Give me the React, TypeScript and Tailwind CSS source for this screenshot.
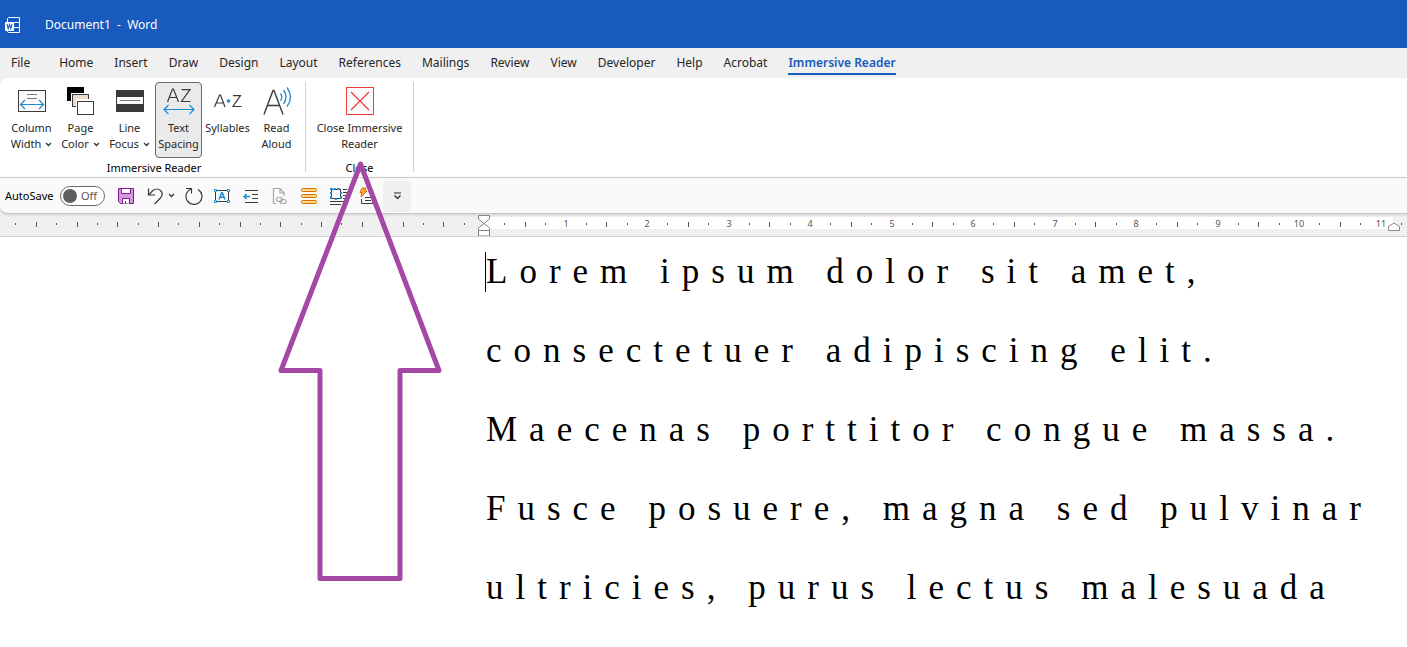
import { useState } from "react";
import type { ReactNode } from "react";

const TABS = ["File", "Home", "Insert", "Draw", "Design", "Layout", "References", "Mailings", "Review", "View", "Developer", "Help", "Acrobat", "Immersive Reader"];

const LINES = [
    "Lorem ipsum dolor sit amet,",
    "consectetuer adipiscing elit.",
    "Maecenas porttitor congue massa.",
    "Fusce posuere, magna sed pulvinar",
    "ultricies, purus lectus malesuada",
];

const Chevron = () => (
    <svg className="inline-block ml-1 mb-px" width="7" height="5" viewBox="0 0 7 5" fill="none" stroke="#333" strokeWidth="1.3">
        <path d="M1 1l2.5 2.5L6 1" />
    </svg>
);

const WordLogo = () => (
    <svg width="16" height="16" viewBox="0 0 16 16" fill="none" stroke="#fff">
        <path d="M2.5 5V1.5l1-1h11v15h-11l-1-1V13M9 5.5h5.5M9 10.5h5.5" />
        <rect x="0" y="5" width="9" height="9" rx="1" fill="#fff" stroke="none" />
        <path d="M2 7l1.2 4.6L4.5 7.6l1.3 4L7 7" stroke="#185abd" strokeWidth="1.1" />
    </svg>
);

const ColumnWidthIcon = () => (
    <svg width="32" height="32" viewBox="0 0 32 32" fill="none">
        <rect x="2.5" y="5.5" width="27" height="21" fill="#fafafa" stroke="#3b3a39" />
        <path d="M11 9.5h10M11 13.5h10" stroke="#797774" />
        <path d="M5 19.5h22M9 15l-4.5 4.5L9 24M23 15l4.5 4.5L23 24" stroke="#1e8bcd" strokeWidth="1.2" />
    </svg>
);

const PageColorIcon = () => (
    <svg width="32" height="32" viewBox="0 0 32 32">
        <rect x="2" y="2" width="17" height="14" fill="#000" />
        <rect x="6" y="8" width="18" height="15" fill="#fff" />
        <rect x="7.5" y="9.5" width="16" height="12" fill="#eadccb" stroke="#3b3a39" />
        <rect x="11" y="14" width="19" height="15" fill="#fff" />
        <rect x="12.5" y="16.5" width="16" height="13" fill="#fff" stroke="#3b3a39" />
    </svg>
);

const LineFocusIcon = () => (
    <svg width="32" height="32" viewBox="0 0 32 32">
        <rect x="2" y="5" width="28" height="22" fill="#3b3a39" />
        <rect x="3" y="12" width="26" height="7" fill="#fafafa" />
        <path d="M6 15.5h20" stroke="#797774" />
    </svg>
);

const TextSpacingIcon = () => (
    <svg width="32" height="32" viewBox="0 0 32 32" fill="none" stroke="#3b3a39" strokeWidth="1.2">
        <path d="M4.5 17L9.5 4h1l5 13M6.500 12.5h7M18.500 4.600h8.500L18.500 16.500h9" />
        <path d="M1 24.5h30M5.5 20L1 24.5 5.5 29M26.5 20l4.5 4.500-4.500 4.500" stroke="#1e8bcd" />
    </svg>
);

const SyllablesIcon = () => (
    <svg width="32" height="32" viewBox="0 0 32 32" fill="none" stroke="#3b3a39" strokeWidth="1.2">
        <path d="M2.500 22L7.500 10h1l4.500 12M4.500 18h7M21 10.600h7.500L21 21.500h8.500" />
        <circle cx="16.500" cy="16" r="1.800" fill="#1e8bcd" stroke="none" />
    </svg>
);

const ReadAloudIcon = () => (
    <svg width="32" height="32" viewBox="0 0 32 32" fill="none" stroke="#3b3a39" strokeWidth="1.4">
        <path d="M3 29.500L12 5.500h1l9 24M6.500 20.500h12" />
        <path d="M19.500 8.500q2.500 3.500 0 7.500M22.500 5q5 7 0 14M26 2.500q7 9.500 0 19" stroke="#1e8bcd" strokeWidth="1.3" />
    </svg>
);

const CloseIcon = () => (
    <svg width="32" height="32" viewBox="0 0 32 32" fill="none" stroke="#e83c3c">
        <rect x="2.5" y="2.5" width="27" height="27" fill="#fafafa" />
        <path d="M7 7l18 18M25 7L7 25" strokeWidth="1.2" />
    </svg>
);

const SaveIcon = () => (
    <svg width="18" height="18" viewBox="0 0 18 18" stroke="#881798">
        <path d="M1.5 1.5h15v15h-13l-2-2z" fill="#d59add" />
        <path d="M4.5 1.5h9v5h-9zM5.500 16.500v-5h7v5" fill="#fff" />
        <path d="M8.500 16.500V14" />
    </svg>
);

const UndoIcon = () => (
    <svg width="18" height="18" viewBox="0 0 18 18" fill="none" stroke="#3b3a39" strokeWidth="1.2">
        <path d="M2.500 1.500v6.500h6.500M2.500 8l4.500-4.500q4-3 7.500 0t0 7.500l-6 6" />
    </svg>
);

const RedoIcon = () => (
    <svg width="18" height="18" viewBox="0 0 18 18" fill="none" stroke="#3b3a39" strokeWidth="1.2">
        <path d="M1 1.500h5.500v5M6 2A8 8 0 1 0 13 2.500" />
    </svg>
);

const TextBoxIcon = () => (
    <svg width="18" height="18" viewBox="0 0 18 18" fill="none">
        <path d="M2.500 3.500h13v11h-13z" stroke="#3b3a39" />
        <path d="M1.500 2.500h2v2h-2zM14.500 2.500h2v2h-2zM1.500 13.500h2v2h-2zM14.500 13.500h2v2h-2z" fill="#fff" stroke="#1e8bcd" />
        <path d="M6 12.500L8.700 5.800h.6l2.700 6.700M7 10.300h4" stroke="#1e8bcd" strokeWidth="1.500" />
    </svg>
);

const IndentIcon = () => (
    <svg width="18" height="18" viewBox="0 0 18 18" fill="none">
        <path d="M3 3.500h13M10 7.500h6M10 11.500h6M3 15.500h13" stroke="#3b3a39" />
        <path d="M8 9.500H2M4.500 7L2 9.500 4.500 12" stroke="#1e8bcd" strokeWidth="1.300" />
    </svg>
);

const LinkDocIcon = () => (
    <svg width="18" height="18" viewBox="0 0 18 18" fill="none" stroke="#a6a6a6" strokeWidth="1.200">
        <path d="M5 16.500H2.500v-15H9l4 4V9M9 1.500v4.500h4" />
        <rect x="5.500" y="10.500" width="6" height="4" rx="2" />
        <rect x="9" y="12.500" width="6" height="4" rx="2" />
    </svg>
);

const BarsIcon = () => (
    <svg width="18" height="18" viewBox="0 0 18 18" fill="#fcd889" stroke="#e06c00">
        <rect x="1.500" y="1.500" width="15" height="3" rx="1" />
        <rect x="1.500" y="7.500" width="15" height="3" rx="1" />
        <rect x="1.500" y="13.500" width="15" height="3" rx="1" />
    </svg>
);

const SelectionIcon = () => (
    <svg width="18" height="18" viewBox="0 0 18 18" fill="none">
        <rect x="2.500" y="2.500" width="9" height="9" stroke="#3b3a39" />
        <path d="M1 1h3v2H1zM5 1h2v2H5zM8 1h3v2H8zM1 5h2v2H1zM1 9h2v3H1zM11 5h2v2h-2zM11 9h2v3h-2zM6 11h2v2H6z" fill="#1e8bcd" />
        <path d="M14 2.500h4M14 5.500h4M14 8.500h4M14 11.500h4M1 14.500h16M1 17.500h11" stroke="#3b3a39" />
    </svg>
);

const FlashIcon = () => (
    <svg width="18" height="18" viewBox="0 0 18 18" fill="none">
        <path d="M4 1h4L6.500 4H9l-6 6 1-4.500H2z" fill="#fcb04c" stroke="#e06c00" />
        <path d="M3.500 12v4.500h11V6M7 10.500h6M7 13.500h6" stroke="#3b3a39" />
    </svg>
);

const QUICK = [
    { label: "Text Box", icon: <TextBoxIcon /> },
    { label: "Decrease Indent", icon: <IndentIcon /> },
    { label: "Link to Document", icon: <LinkDocIcon /> },
    { label: "Styles", icon: <BarsIcon /> },
    { label: "Select", icon: <SelectionIcon /> },
    { label: "Quick Format", icon: <FlashIcon /> },
];

const RibbonButton = ({ icon, top, bottom, menu, active, wide }: { icon: ReactNode; top: string; bottom?: string; menu?: boolean; active?: boolean; wide?: boolean }) => {
    return (
        <button className={`flex h-19 shrink-0 flex-col items-center rounded border pt-[2px] text-[11px] leading-4 whitespace-nowrap ${wide ? "w-24" : "w-[47px]"} ${active ? "border-[#6b6b6b] bg-[#eaeaea]" : "border-transparent"}`}>
            {icon}
            <span className="mt-[3px]">{top}</span>
            {bottom ? <span>{bottom}{menu ? <Chevron /> : null}</span> : null}
        </button>
    );
};

// Horizontal ruler, four marks to the inch, zero at the left margin
const Ruler = () => {
    const zero = 484;
    const step = 20.375;
    const marks = Array.from({ length: 69 }, (_, i) => i - 23).filter((n) => n !== 0);
    return (
        <svg className="block h-[22px] w-full" fill="none">
            <rect x={zero} y="3" width="909" height="12" fill="#fff" />
            {marks.map((n) => {
                const x = Math.round(zero + n * step);
                if (n > 0 && n % 4 === 0) {
                    return <text key={n} x={x} y="13" textAnchor="middle" fill="#555" className="text-[9px]">{n / 4}</text>;
                }
                return n % 2 === 0
                    ? <path key={n} d={`M${x + 0.5} 8v5`} stroke="#555" />
                    : <path key={n} d={`M${x + 0.5} 9v2`} stroke="#555" />;
            })}
            <path d="M478.500 1.500h11v3.500l-5.500 4.500 5.500 4.500v8h-11v-8l5.500-4.500-5.500-4.500zM478.500 16.500h11" fill="#fff" stroke="#868686" />
            <path d="M1388.500 16.500v-4l5.500-3.500 5.500 3.500v4z" fill="#fff" stroke="#868686" />
        </svg>
    );
};

const App = () => {
    const [tab, setTab] = useState("Immersive Reader");
    const [autoSave, setAutoSave] = useState(false);

    return (
        <div className="relative min-h-screen overflow-hidden bg-white font-['Noto_Sans',sans-serif] text-[#262626]">
            <header className="flex h-12 items-center gap-6 bg-[#185abd] pt-px pl-[5px] text-xs text-white">
                <WordLogo />
                <h1 className="whitespace-pre">Document1  -  Word</h1>
            </header>

            <div className="bg-[#f0f0f0]">
                <nav className="flex h-[30px] items-end gap-[21px] pb-[3px] pl-[11px] text-xs">
                    {TABS.map((name) => (
                        <button
                            key={name}
                            onClick={() => setTab(name)}
                            className={`h-[22px] border-b-2 whitespace-nowrap ${name === "File" ? "mr-2" : ""} ${name === tab ? "border-[#185abd] font-semibold text-[#185abd]" : "border-transparent"}`}
                        >
                            {name}
                        </button>
                    ))}
                </nav>

                <section className="flex h-[99px] rounded-tl-lg bg-white pt-1">
                    <div className="flex flex-col items-center pr-[5px] pl-2">
                        <div className="flex gap-[2px]">
                            <RibbonButton icon={<ColumnWidthIcon />} top="Column" bottom="Width" menu />
                            <RibbonButton icon={<PageColorIcon />} top="Page" bottom="Color" menu />
                            <RibbonButton icon={<LineFocusIcon />} top="Line" bottom="Focus" menu />
                            <RibbonButton icon={<TextSpacingIcon />} top="Text" bottom="Spacing" active />
                            <RibbonButton icon={<SyllablesIcon />} top="Syllables" />
                            <RibbonButton icon={<ReadAloudIcon />} top="Read" bottom="Aloud" />
                        </div>
                        <span className="mt-[2px] text-[11px] leading-4 text-black">Immersive Reader</span>
                    </div>
                    <div className="mb-[5px] flex w-[109px] flex-col items-center border-x border-[#d0d0d0]">
                        <RibbonButton icon={<CloseIcon />} top="Close Immersive" bottom="Reader" wide />
                        <span className="mt-[2px] text-[11px] leading-4 text-black">Close</span>
                    </div>
                </section>

                <section className="flex h-[37px] items-center rounded-bl-lg border-t border-b border-[#c8c8c8] bg-[#fafafa] pt-px pl-[5px] shadow-sm">
                    <label htmlFor="autosave" className="w-[55px] text-[11px] text-black">AutoSave</label>
                    <button
                        id="autosave"
                        role="switch"
                        aria-checked={autoSave}
                        onClick={() => setAutoSave(!autoSave)}
                        className="flex h-5 w-[45px] items-center gap-1 rounded-full border border-[#6b6b6b] bg-white pl-[2px] text-[11px] text-[#555]"
                    >
                        <span className="size-3.5 rounded-full bg-[#605e5c]" />
                        {autoSave ? "On" : "Off"}
                    </button>
                    <button aria-label="Save" className="ml-3"><SaveIcon /></button>
                    <button aria-label="Undo" className="ml-[11px] flex items-center"><UndoIcon /><Chevron /></button>
                    <button aria-label="Redo" className="mx-2.5"><RedoIcon /></button>
                    <div className="flex gap-[11px]">
                        {QUICK.map((item) => (
                            <button key={item.label} aria-label={item.label}>{item.icon}</button>
                        ))}
                    </div>
                    <button aria-label="Customize Quick Access Toolbar" className="ml-[7px] flex h-[31px] w-7 items-center justify-center rounded bg-[#f0f0f0]">
                        <svg width="9" height="8" viewBox="0 0 9 8" fill="none" stroke="#262626" strokeWidth="1.2">
                            <path d="M1 1h7M1.500 3.500l3 3 3-3" />
                        </svg>
                    </button>
                </section>

                <div className="border-b border-[#d0d0d0]">
                    <Ruler />
                </div>
            </div>

            <main className="pt-[15px] pl-[485px] font-['Liberation_Serif',serif] text-[35px] text-black">
                {LINES.map((line, i) => (
                    <p key={line} className="flex h-[79px] tracking-[12px] whitespace-nowrap">
                        <span className={`h-10 border-l leading-10 ${i === 0 ? "border-black" : "border-transparent"}`}>{line}</span>
                    </p>
                ))}
            </main>

            <svg className="pointer-events-none absolute top-0 left-0" width="460" height="600" fill="none" stroke="#a349a4" strokeWidth="5" strokeLinejoin="round">
                <path d="M360.500 164L439 370.500h-39v208h-80v-208h-39z" />
            </svg>
        </div>
    );
};

export default App;
